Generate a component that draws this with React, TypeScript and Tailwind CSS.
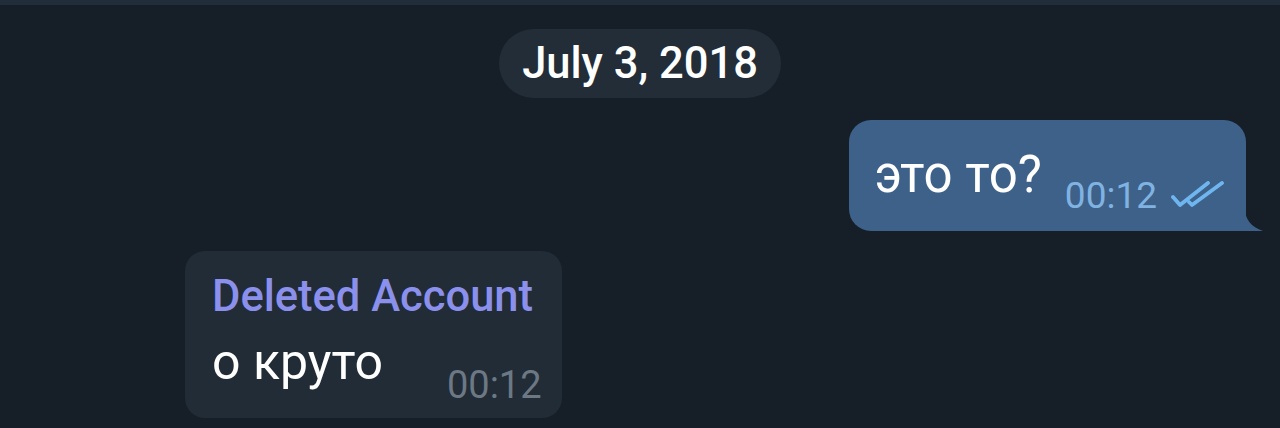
export default function App() {
  return (
    <div className="h-[428px] overflow-hidden bg-[#161f28] font-['Roboto',sans-serif]">
      <div className="h-[5px] bg-[#222d3b]" />
      <div className="flex justify-center pt-[24px]">
        <div className="flex h-[69px] items-center rounded-full bg-[#222d38] px-[23px] text-[43.5px] font-medium leading-none text-white">
          July 3, 2018
        </div>
      </div>

      {/* outgoing */}
      <div className="mt-[22px] flex justify-end pr-[34px]">
        <div className="relative flex h-[111px] items-end rounded-[22px] rounded-br-none bg-[#3e6189] pb-[17px] pl-[26px] pr-[22px]">
          <span className="mb-[14px] text-[51px] leading-none text-white">это то?</span>
          <span className="ml-[23px] text-[37px] leading-none text-[#80b3e2]">00:12</span>
          <svg className="mb-[6px] ml-[13px]" width="54" height="27" viewBox="0 0 54 27" fill="none">
            <path d="M3 16 L10 24 L38 2" stroke="#6fb6f0" strokeWidth="3.8" strokeLinecap="round" strokeLinejoin="round" />
            <path d="M19 21 L22 24 L52 2" stroke="#6fb6f0" strokeWidth="3.8" strokeLinecap="round" strokeLinejoin="round" />
          </svg>
          <svg className="absolute bottom-0 right-[-17px]" width="18" height="22" viewBox="0 0 18 22">
            <path d="M0 0 C0 10 6 18 18 22 L0 22 Z" fill="#3e6189" />
          </svg>
        </div>
      </div>

      {/* incoming */}
      <div className="mt-[20px] pl-[185px]">
        <div className="inline-flex flex-col rounded-[20px] bg-[#212c37] pb-[14px] pl-[27px] pr-[20px] pt-[24px]">
          <div className="text-[43.5px] font-medium leading-none text-[#8b90ec]">Deleted Account</div>
          <div className="mt-[18px] flex items-end justify-between">
            <span className="mb-[17px] text-[50px] leading-none text-white">о круто</span>
            <span className="ml-[64px] text-[38px] leading-none text-[#6c7884]">00:12</span>
          </div>
        </div>
      </div>
    </div>
  );
}
